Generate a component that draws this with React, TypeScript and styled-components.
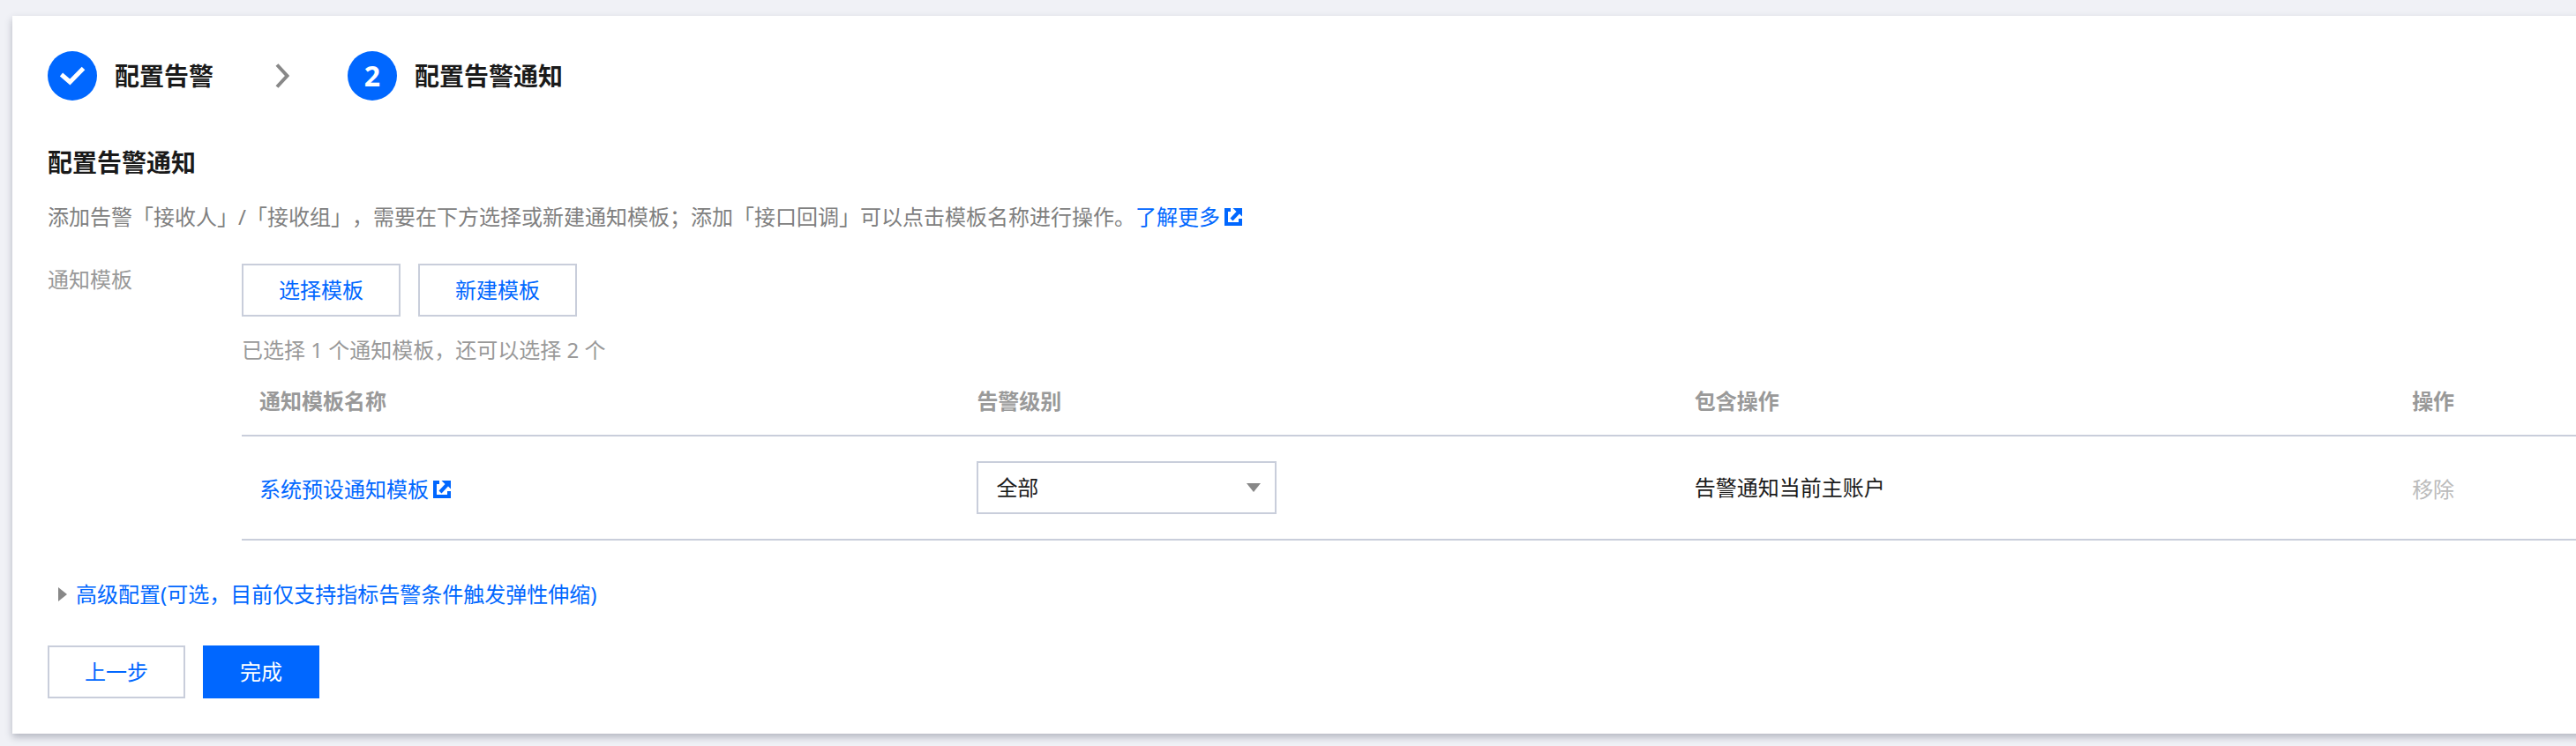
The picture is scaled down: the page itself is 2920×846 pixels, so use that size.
import React from 'react';
import styled, { createGlobalStyle, css } from 'styled-components';

const blue = '#0067ff';
const line = '#c9cedb';

const GlobalStyle = createGlobalStyle`
  *, *::before, *::after { box-sizing: border-box; }
  body {
    margin: 0;
    background: #f0f1f6;
    color: #1a1a1a;
    font-family: 'Noto Sans', 'Noto Sans CJK SC', sans-serif;
    font-size: 24px;
    line-height: 36px;
    text-spacing-trim: space-all;
    overflow-x: hidden;
  }
  button, select { font: inherit; }
`;

const Page = styled.main`
  padding: 18px 0 14px 14px;
`;

const Card = styled.section`
  margin-right: -20px;
  padding: 40px 20px 40px 40px;
  background: #fff;
  box-shadow: 0 4px 8px rgba(54, 58, 80, 0.32);
`;

const Steps = styled.ol`
  display: flex;
  align-items: center;
  margin: 0;
  padding: 0;
  list-style: none;
`;

const Step = styled.li`
  display: flex;
  align-items: center;
  gap: 20px;
  font-size: 28px;
  line-height: 40px;
  font-weight: 700;
`;

const StepMark = styled.span`
  display: flex;
  align-items: center;
  justify-content: center;
  width: 56px;
  height: 56px;
  border-radius: 50%;
  background: ${blue};
  color: #fff;
  font-size: 32px;
`;

const StepArrow = styled.li`
  display: flex;
  margin: 0 66px 0 70px;
`;

const Title = styled.h2`
  margin: 50px 0 0;
  font-size: 28px;
  line-height: 40px;
  font-weight: 700;
`;

const Description = styled.p`
  display: flex;
  margin: 24px 0 0;
  color: #808080;
`;

const TextLink = styled.a`
  display: inline-flex;
  align-items: center;
  gap: 5px;
  color: ${blue};
  text-decoration: none;
`;

const FormRow = styled.div`
  display: grid;
  grid-template-columns: 220px minmax(0, 1fr);
  margin-top: 35px;
  color: #999;
`;

const Buttons = styled.div`
  display: flex;
  gap: 20px;
`;

const Button = styled.button<{ $primary?: boolean }>`
  height: 60px;
  padding: 0 40px;
  border: 2px solid ${line};
  background: #fff;
  color: ${blue};
  ${({ $primary }) =>
    $primary &&
    css`
      border-color: ${blue};
      background: ${blue};
      color: #fff;
    `}
`;

const Hint = styled.p`
  margin: 20px 0 0;
`;

const Table = styled.table`
  width: 100%;
  margin-top: 22px;
  border-collapse: separate;
  border-spacing: 0;
  table-layout: fixed;
`;

const Column = styled.col`
  width: 30.74%;
`;

const HeadCell = styled.th`
  padding: 0 20px 20px;
  border-bottom: 2px solid ${line};
  font-weight: 700;
  text-align: left;
`;

const Cell = styled.td<{ $action?: boolean }>`
  padding: ${({ $action }) => ($action ? '30px 20px 26px' : '28px 20px')};
  border-bottom: 2px solid ${line};
  color: #1a1a1a;
  vertical-align: middle;
`;

const SelectBox = styled.div`
  display: grid;
  grid-template-columns: 1fr auto;
  align-items: center;
  width: 340px;
  height: 60px;
  padding-right: 16px;
  border: 2px solid ${line};

  select {
    grid-area: 1 / 1 / 2 / 3;
    height: 56px;
    margin-right: -16px;
    padding: 0 20px;
    border: 0;
    background: transparent;
    color: #1a1a1a;
    appearance: none;
  }

  svg {
    grid-area: 1 / 2;
    pointer-events: none;
  }
`;

const RemoveButton = styled.button`
  display: block;
  padding: 0;
  border: 0;
  background: none;
  color: #bbb;
`;

const Advanced = styled.button`
  display: flex;
  align-items: center;
  gap: 10px;
  height: 36px;
  margin: 43px 0 40px;
  padding: 0 0 0 12px;
  border: 0;
  background: none;
  color: ${blue};
`;

const ExternalIcon = () => (
  <svg width="20" height="20" viewBox="0 0 20 20" fill="currentColor" aria-hidden="true">
    <path d="M0 0h7v4H4v12h12v-4h4v8H0z" />
    <path d="M9.500 0H20v9.500l-3-3-7.500 8-3-3 7-7.500z" />
  </svg>
);

export default function App() {
  return (
    <>
      <GlobalStyle />
      <Page>
        <Card>
          <Steps>
            <Step>
              <StepMark>
                <svg width="30" height="22" viewBox="0 0 30 22" fill="none" stroke="#fff" strokeWidth="5" aria-hidden="true">
                  <path d="M2.500 9.500L12.300 18L27.500 2.500" />
                </svg>
              </StepMark>
              配置告警
            </Step>
            <StepArrow aria-hidden="true">
              <svg width="16" height="28" viewBox="0 0 16 28" fill="none" stroke="#888" strokeWidth="4">
                <path d="M2 1.500L13.500 14 2 26.500" />
              </svg>
            </StepArrow>
            <Step aria-current="step">
              <StepMark>2</StepMark>
              配置告警通知
            </Step>
          </Steps>

          <Title>配置告警通知</Title>
          <Description>
            添加告警「接收人」/「接收组」，需要在下方选择或新建通知模板；添加「接口回调」可以点击模板名称进行操作。
            <TextLink href="#learn-more">
              了解更多
              <ExternalIcon />
            </TextLink>
          </Description>

          <FormRow>
            <span>通知模板</span>
            <div>
              <Buttons>
                <Button type="button">选择模板</Button>
                <Button type="button">新建模板</Button>
              </Buttons>
              <Hint>已选择 1 个通知模板，还可以选择 2 个</Hint>
              <Table>
                <colgroup>
                  <Column />
                  <Column />
                  <Column />
                  <col />
                </colgroup>
                <thead>
                  <tr>
                    <HeadCell scope="col">通知模板名称</HeadCell>
                    <HeadCell scope="col">告警级别</HeadCell>
                    <HeadCell scope="col">包含操作</HeadCell>
                    <HeadCell scope="col">操作</HeadCell>
                  </tr>
                </thead>
                <tbody>
                  <tr>
                    <Cell $action>
                      <TextLink href="#template">
                        系统预设通知模板
                        <ExternalIcon />
                      </TextLink>
                    </Cell>
                    <Cell>
                      <SelectBox>
                        <select aria-label="告警级别" defaultValue="all">
                          <option value="all">全部</option>
                        </select>
                        <svg width="16" height="10" viewBox="0 0 16 10" fill="#888" aria-hidden="true">
                          <path d="M0 0h16L8 10z" />
                        </svg>
                      </SelectBox>
                    </Cell>
                    <Cell>告警通知当前主账户</Cell>
                    <Cell $action>
                      <RemoveButton type="button" disabled>
                        移除
                      </RemoveButton>
                    </Cell>
                  </tr>
                </tbody>
              </Table>
            </div>
          </FormRow>

          <Advanced type="button" aria-expanded="false">
            <svg width="10" height="16" viewBox="0 0 10 16" fill="#888" aria-hidden="true">
              <path d="M0 0l10 8-10 8z" />
            </svg>
            高级配置(可选，目前仅支持指标告警条件触发弹性伸缩)
          </Advanced>

          <Buttons>
            <Button type="button">上一步</Button>
            <Button type="button" $primary>
              完成
            </Button>
          </Buttons>
        </Card>
      </Page>
    </>
  );
}
